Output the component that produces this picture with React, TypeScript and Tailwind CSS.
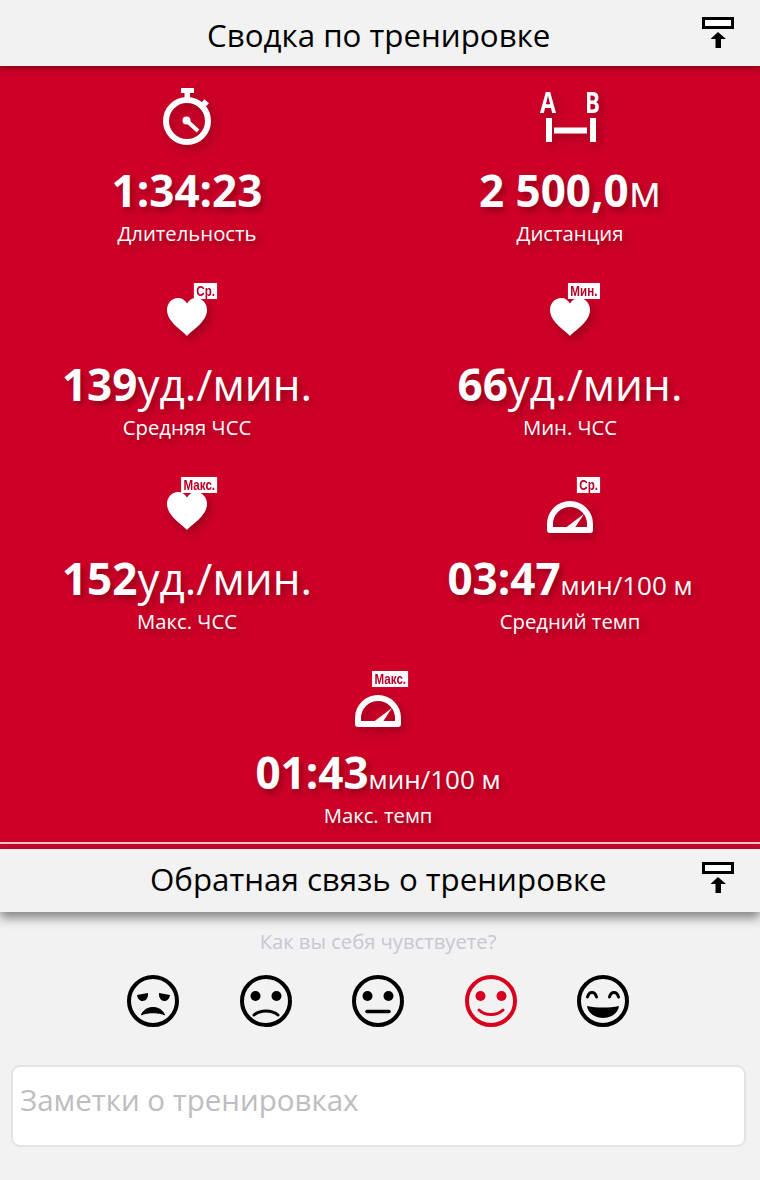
const FONT = "font-['Open_Sans',sans-serif]";
const SHADOW = "shrink-0 drop-shadow-[3px_4px_5px_rgba(70,0,15,0.4)]";
const TEXT_SHADOW = "[text-shadow:3px_4px_6px_rgba(70,0,15,0.45)]";

function ExportIcon() {
  return (
    <svg width="34" height="34" viewBox="0 0 34 34" className="shrink-0">
      <rect x="2.5" y="2.5" width="29" height="9" fill="#fff" stroke="#000" strokeWidth="3" />
      <path d="M17 16 L25 23 H20 V32 H14.5 V23 H9.5 Z" fill="#000" />
    </svg>
  );
}

function Stopwatch() {
  return (
    <svg width="60" height="60" viewBox="0 0 60 60" className={SHADOW}>
      <rect x="24" y="2" width="13" height="5" fill="#fff" />
      <rect x="27.5" y="6" width="5.5" height="6" fill="#fff" />
      <rect x="45" y="14.5" width="6" height="5" transform="rotate(42 48 17)" fill="#fff" />
      <circle cx="30" cy="35" r="21" fill="none" stroke="#fff" strokeWidth="6" />
      <circle cx="29.5" cy="34.5" r="4" fill="#fff" />
      <path d="M30 35 L41 45" stroke="#fff" strokeWidth="4" />
    </svg>
  );
}

function Distance() {
  return (
    <svg width="72" height="68" viewBox="0 -8 72 68" className={`-mt-[8px] -mr-[8px] ${SHADOW}`}>
      <text x="2" y="27" textLength="16" lengthAdjust="spacingAndGlyphs" fontSize="28" fontWeight="700" fill="#fff" fontFamily="'Open Sans',sans-serif">A</text>
      <text x="47" y="27" textLength="15" lengthAdjust="spacingAndGlyphs" fontSize="28" fontWeight="700" fill="#fff" fontFamily="'Open Sans',sans-serif">B</text>
      <rect x="8" y="32" width="6" height="24" fill="#fff" />
      <rect x="16" y="41.5" width="33" height="6" fill="#fff" />
      <rect x="52" y="32" width="6" height="24" fill="#fff" />
    </svg>
  );
}

function Heart() {
  return (
    <svg width="60" height="60" viewBox="0 0 60 60" className={SHADOW}>
      <path d="M30 56 C26 51 10 42 10 30 C10 23 15 18 21 18 C25 18 28 20 30 23.5 C32 20 35 18 39 18 C45 18 50 23 50 30 C50 42 34 51 30 56 Z" fill="#fff" />
    </svg>
  );
}

function Gauge() {
  return (
    <svg width="60" height="60" viewBox="0 0 60 60" className={SHADOW}>
      <path d="M10 56 V50 A20 20 0 0 1 50 50 V56 Z" fill="none" stroke="#fff" strokeWidth="6" strokeLinejoin="round" />
      <path d="M24 55 L44 40 L34 55 Z" fill="#fff" />
    </svg>
  );
}

function Badge({ label }: { label: string }) {
  return (
    <span className="absolute right-0 top-[3px] flex h-[16px] items-center bg-white px-[3px] font-['Liberation_Sans',sans-serif] text-[14.5px] font-bold leading-none text-[#b5002a] [transform:scaleX(0.8)] [transform-origin:right]">
      {label}
    </span>
  );
}

function Stat({ icon, badge, value, unit, small, label, wide }: { icon: React.ReactNode; badge?: string; value: string; unit?: string; small?: boolean; label: string; wide?: boolean }) {
  return (
    <div className={`flex h-[162px] flex-col items-center text-white ${wide ? "col-span-2 pr-[4px]" : ""}`}>
      <div className="relative flex h-[60px] min-w-[60px] items-start justify-center">
        {icon}
        {badge && <Badge label={badge} />}
      </div>
      <div className={`mt-[16px] flex h-[56px] items-baseline whitespace-nowrap text-[44px] leading-[56px] ${TEXT_SHADOW}`}>
        <span className="font-bold">{value}</span>
        {unit && <span className={small ? "text-[26px]" : ""}>{unit}</span>}
      </div>
      <div className={`mt-[1px] text-[20.3px] leading-[28px] ${TEXT_SHADOW}`}>{label}</div>
    </div>
  );
}

function Face({ children, color = "#000" }: { children: React.ReactNode; color?: string }) {
  return (
    <svg width="52" height="52" viewBox="0 0 52 52" style={{ color }}>
      <circle cx="26" cy="26" r="24" fill="none" stroke="currentColor" strokeWidth="4" />
      {children}
    </svg>
  );
}

function Eyes() {
  return (
    <>
      <circle cx="15.5" cy="21" r="5" fill="currentColor" />
      <circle cx="36.5" cy="21" r="5" fill="currentColor" />
    </>
  );
}

export default function App() {
  return (
    <div className={`h-[1180px] w-[760px] overflow-hidden bg-[#f2f2f2] ${FONT}`}>
      <header className="relative z-10 flex h-[66px] items-center justify-between pt-[4px] pl-[207px] pr-[25px] shadow-[0_2px_6px_rgba(60,0,0,0.55)]">
        <h1 className="text-[31.3px] font-normal leading-[40px] text-black">Сводка по тренировке</h1>
        <div className="-mt-[4px]"><ExportIcon /></div>
      </header>

      <section className="h-[776px] bg-[#ce0028] pt-[20px]">
        <div className="grid grid-cols-[374px_380px] gap-x-[6px] gap-y-[32px]">
          <Stat icon={<Stopwatch />} value="1:34:23" label="Длительность" />
          <Stat icon={<Distance />} value="2 500,0" unit="м" label="Дистанция" />
          <Stat icon={<Heart />} badge="Ср." value="139" unit="уд./мин." label="Средняя ЧСС" />
          <Stat icon={<Heart />} badge="Мин." value="66" unit="уд./мин." label="Мин. ЧСС" />
          <Stat icon={<Heart />} badge="Макс." value="152" unit="уд./мин." label="Макс. ЧСС" />
          <Stat icon={<Gauge />} badge="Ср." value="03:47" unit="мин/100 м" small label="Средний темп" />
          <Stat wide icon={<Gauge />} badge="Макс." value="01:43" unit="мин/100 м" small label="Макс. темп" />
        </div>
      </section>
      <div className="h-[2px] bg-[#f0c4c8]" />
      <div className="h-[5px] bg-[#c20a2a]" />

      <header className="relative z-10 flex h-[63px] items-center justify-between pl-[150px] pr-[25px] shadow-[0_6px_10px_rgba(0,0,0,0.45)]">
        <h2 className="-mt-[3px] text-[31.3px] font-normal leading-[40px] text-black">Обратная связь о тренировке</h2>
        <div className="-mt-[5px]"><ExportIcon /></div>
      </header>

      <p className="mt-[17px] pr-[4px] text-center text-[20.2px] leading-[24px] text-[#c6c8d2]">Как вы себя чувствуете?</p>

      <div className="mt-[22px] flex justify-center gap-[60.5px] pr-[4px]">
        <Face>
          <path d="M10 20 L21 18 C21.5 22.5 19 26 15.5 26 C12.5 26 10.5 23.5 10 20 Z M43 20 L32 18 C31.5 22.5 34 26 37.5 26 C40.5 26 42.5 23.5 43 20 Z" fill="currentColor" />
          <path d="M14.5 40 C16 35 21 32.5 26 32.5 C31 32.5 36 35 37.5 40 C33 37 19 37 14.5 40 Z" fill="currentColor" stroke="currentColor" strokeWidth="1" strokeLinejoin="round" />
        </Face>
        <Face>
          <Eyes />
          <path d="M14 40 C20 34.5 32 34.5 38 40" fill="none" stroke="currentColor" strokeWidth="3" strokeLinecap="round" />
        </Face>
        <Face>
          <Eyes />
          <path d="M15 36.5 H37" stroke="currentColor" strokeWidth="3.5" strokeLinecap="round" />
        </Face>
        <Face color="#d8001f">
          <Eyes />
          <path d="M14 35 C20 41 32 41 38 35" fill="none" stroke="currentColor" strokeWidth="3" strokeLinecap="round" />
        </Face>
        <Face>
          <path d="M10.5 22 C12 16 18 16 19.5 22 M32.5 22 C34 16 40 16 41.5 22" fill="none" stroke="currentColor" strokeWidth="3" strokeLinecap="round" />
          <path d="M10 31 C20 33 32 33 42 31 C41 39 33 43 26 43 C19 43 11 39 10 31 Z" fill="currentColor" />
        </Face>
      </div>

      <div className="mx-[11px] mt-[38px] h-[82px] w-[735px] rounded-[9px] border-2 border-[#e3e3e3] bg-white pl-[7px] pt-[14px] text-[29.5px] leading-[38px] text-[#bdbdc2]">
        Заметки о тренировках
      </div>
    </div>
  );
}
